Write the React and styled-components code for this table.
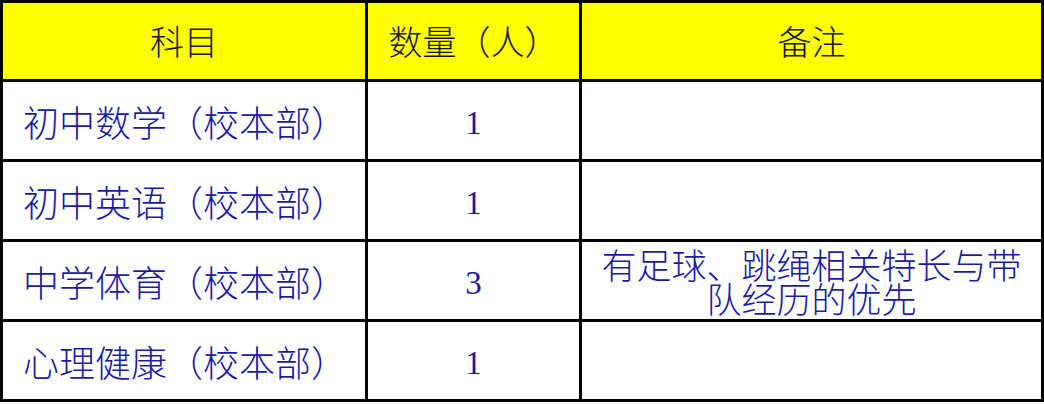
import React from "react";
import styled, { createGlobalStyle } from "styled-components";

const Global = createGlobalStyle`
  html, body { margin: 0; padding: 0; background: #ffffff; }
  body { width: 1044px; height: 404px; overflow: hidden; }
`;

const Table = styled.table`
  width: 1044px;
  border-collapse: separate;
  border-spacing: 0;
  table-layout: fixed;
  border-top: 3px solid #000;
  border-left: 3px solid #000;
  font-family: "Noto Sans CJK SC", "Liberation Serif", serif;
  font-weight: 300;
`;

const Col = styled.col`
  width: ${(p) => p.$w}px;
`;

const HeadRow = styled.tr`
  height: 79px;
`;

const BodyRow = styled.tr`
  height: 80px;
`;

const HeadCell = styled.th`
  background: #ffff00;
  border-right: 3px solid #000;
  border-bottom: 3px solid #000;
  color: #141414;
  font-size: 34px;
  font-weight: 300;
  text-align: center;
  padding: 0;
  line-height: 1.1;
`;

const Cell = styled.td`
  border-right: 3px solid #000;
  border-bottom: 3px solid #000;
  color: #1a1aa6;
  font-size: ${(p) => (p.$align === "left" ? 36 : 35)}px;
  text-align: ${(p) => p.$align || "center"};
  padding: ${(p) => (p.$align === "left" ? "0 0 0 20px" : "0 8px")};
  vertical-align: middle;
  line-height: 34px;
  white-space: ${(p) => (p.$nowrap ? "nowrap" : "normal")};
`;

const Num = styled.span`
  font-family: "Liberation Serif", serif;
  font-size: 33px;
  font-weight: 400;
`;

const rows = [
  { subject: "初中数学（校本部）", count: "1", note: "" },
  { subject: "初中英语（校本部）", count: "1", note: "" },
  { subject: "中学体育（校本部）", count: "3", note: "有足球、跳绳相关特长与带队经历的优先" },
  { subject: "心理健康（校本部）", count: "1", note: "" },
];

export default function App() {
  return (
    <>
      <Global />
      <Table>
        <colgroup>
          <Col $w={365} />
          <Col $w={214} />
          <Col $w={462} />
        </colgroup>
        <thead>
          <HeadRow>
            <HeadCell>科目</HeadCell>
            <HeadCell>数量（人）</HeadCell>
            <HeadCell>备注</HeadCell>
          </HeadRow>
        </thead>
        <tbody>
          {rows.map((r) => (
            <BodyRow key={r.subject}>
              <Cell $align="left" $nowrap>{r.subject}</Cell>
              <Cell><Num>{r.count}</Num></Cell>
              <Cell>{r.note}</Cell>
            </BodyRow>
          ))}
        </tbody>
      </Table>
    </>
  );
}
